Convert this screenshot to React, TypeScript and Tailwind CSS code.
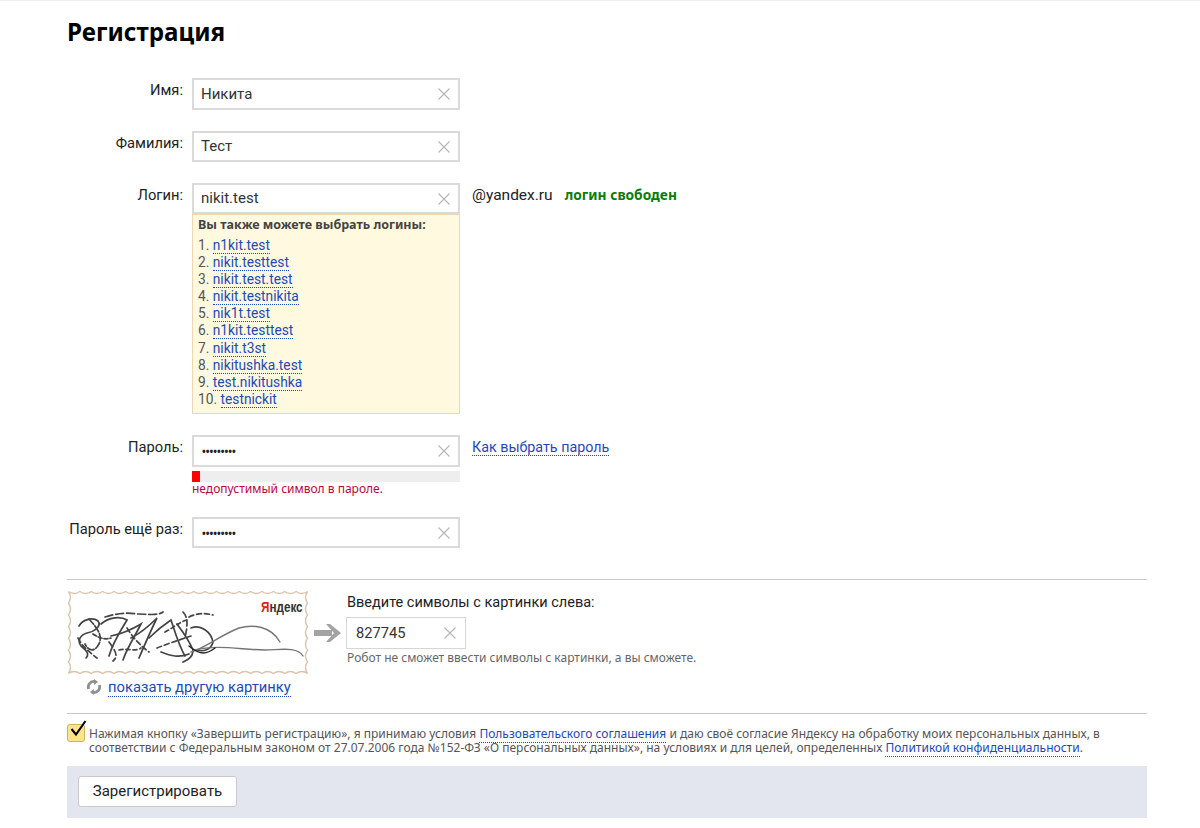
const font = { fontFamily: '"Noto Sans", sans-serif' };
const roboto = { fontFamily: 'Roboto, sans-serif' };

const logins = [
  "n1kit.test",
  "nikit.testtest",
  "nikit.test.test",
  "nikit.testnikita",
  "nik1t.test",
  "n1kit.testtest",
  "nikit.t3st",
  "nikitushka.test",
  "test.nikitushka",
  "testnickit",
];

function ClearIcon() {
  return (
    <svg width="12" height="12" viewBox="0 0 12 12" className="shrink-0">
      <path d="M0.5 0.5L11.5 11.5M11.5 0.5L0.5 11.5" stroke="#b5b5b5" strokeWidth="1.1" fill="none" />
    </svg>
  );
}

function Field({ value, secret, short, className }: { value: string; secret?: boolean; short?: boolean; className?: string }) {
  return (
    <div className={`flex items-center justify-between ${short ? "h-[31px]" : "h-[32px]"} w-[268px] border-2 border-[#dadada] bg-white pl-[7px] pr-[8px] ${className ?? ""}`}>
      {secret ? (
        <span className="ml-[1px] text-[10px] font-bold text-[#222] leading-none">{value}</span>
      ) : (
        <span style={roboto} className="text-[15px] text-[#333] leading-none">{value}</span>
      )}
      <ClearIcon />
    </div>
  );
}

function Label({ children }: { children: string }) {
  return <div style={roboto} className="text-right text-[14.7px] leading-[20px] text-[#222] whitespace-nowrap pt-[2px]">{children}</div>;
}

function DottedLink({ children, className }: { children: string; className?: string }) {
  return <span className={`text-[#1c4ab4] border-b border-dotted border-[#1c4ab4] ${className ?? ""}`}>{children}</span>;
}

function Stamp() {
  // wavy edge of the captcha picture
  const w = 242;
  const h = 85;
  const inset = 1.5;
  const amp = 2;
  const nx = 21;
  const ny = 7;
  const stepX = (w - 2 * inset) / nx;
  const stepY = (h - 2 * inset) / ny;
  let d = `M${inset} ${inset}`;
  for (let i = 0; i < nx; i++) d += ` Q${inset + (i + 0.5) * stepX} ${inset + amp * 2} ${inset + (i + 1) * stepX} ${inset}`;
  for (let i = 0; i < ny; i++) d += ` Q${w - inset - amp * 2} ${inset + (i + 0.5) * stepY} ${w - inset} ${inset + (i + 1) * stepY}`;
  for (let i = nx; i > 0; i--) d += ` Q${inset + (i - 0.5) * stepX} ${h - inset - amp * 2} ${inset + (i - 1) * stepX} ${h - inset}`;
  for (let i = ny; i > 0; i--) d += ` Q${inset + amp * 2} ${inset + (i - 0.5) * stepY} ${inset} ${inset + (i - 1) * stepY}`;
  return (
    <svg width={w} height={h} viewBox={`0 0 ${w} ${h}`} className="block">
      <path d={d} fill="#fff" stroke="#d9c3ab" strokeWidth="1.4" />
      <text transform="translate(194 22) scale(0.78 1)" fontSize="15" fontWeight="700" fill="#333" style={{ fontFamily: '"Liberation Sans", sans-serif' }}>
        <tspan fill="#e0201b">Я</tspan>ндекс
      </text>
      <g fill="none" stroke="#444" strokeWidth="1.7" strokeLinecap="round">
        <path d="M12 36C16 29 26 27 31 31C35 36 27 42 20 43C13 45 10 51 14 56C19 60 23 64 19 68" />
        <path d="M22 29C30 38 38 47 30 57C26 62 21 60 18 54" strokeDasharray="7 2" />
        <path d="M11 48C15 56 22 62 30 68" strokeDasharray="5 3" />
        <path d="M26 44C32 48 38 50 44 48" strokeDasharray="4 2" />
        <path d="M34 34C42 27 54 26 60 30C54 40 46 52 42 66" />
        <path d="M38 27C48 24 58 22 70 24C80 24 90 26 96 22" strokeDasharray="8 3" />
        <path d="M44 46C54 44 64 40 74 34C68 46 60 58 56 70" />
        <path d="M42 52C48 60 52 66 46 71" strokeDasharray="6 3" />
        <path d="M64 48C76 42 84 34 90 28C84 40 78 54 72 68" />
        <path d="M60 38C66 48 74 56 82 62" strokeDasharray="5 3" />
        <path d="M52 60C60 58 68 62 74 58" strokeDasharray="4 3" />
        <path d="M82 48C90 40 98 34 104 30C108 42 112 56 118 66" />
        <path d="M90 58C100 54 112 50 124 46" strokeDasharray="5 3" />
        <path d="M94 62C104 66 112 68 122 64" />
        <path d="M116 22C122 28 120 38 118 48" strokeDasharray="6 3" />
        <path d="M122 27C130 23 138 23 146 25" strokeDasharray="5 3" />
        <path d="M124 38C134 34 144 42 146 52C144 60 136 62 130 60" />
        <path d="M110 34C116 42 122 50 126 60C126 68 120 70 116 72" />
        <path d="M98 42C106 38 112 32 120 30" strokeDasharray="4 3" />
      </g>
      <g fill="none" stroke="#757575" strokeWidth="1.4" strokeLinecap="round">
        <path d="M124 62C138 58 152 46 172 38C186 34 204 36 213 52" />
        <path d="M128 60C150 54 176 60 198 60C212 60 230 56 236 66" />
        <path d="M122 56C134 66 140 64 148 58" stroke="#222" />
      </g>
    </svg>
  );
}

export default function App() {
  return (
    <div style={font} className="w-[1200px] h-[828px] overflow-hidden bg-white border-t border-[#eeeeee] pl-[67px] pr-[53px]">
      <h1 className="mt-[15px] text-[24.2px] leading-[32px] font-bold text-black">Регистрация</h1>

      <div className="mt-[30px] grid grid-cols-[116px_268px_1fr] gap-x-[9px]">
        <Label>Имя:</Label>
        <Field value="Никита" />
        <div />

        <div className="mt-[21px]"><Label>Фамилия:</Label></div>
        <Field value="Тест" short className="mt-[21px]" />
        <div />

        <div className="mt-[21px]"><Label>Логин:</Label></div>
        <div className="mt-[21px]">
          <Field value="nikit.test" short />
          <div style={roboto} className="h-[200px] border border-[#f0d6ae] bg-[#fff9e0] pl-[5px] pt-[1px] text-[13.75px] leading-[17.1px] text-[#555]">
            <div style={font} className="text-[12.5px] font-bold leading-[17px] text-[#444] mb-[4px]">Вы также можете выбрать логины:</div>
            {logins.map((l, i) => (
              <div key={l}>
                {i + 1}. <DottedLink>{l}</DottedLink>
              </div>
            ))}
          </div>
        </div>
        <div style={roboto} className="mt-[21px] pl-[3px] text-[15.5px] leading-[24px] whitespace-nowrap">
          <span className="text-[#222]">@yandex.ru</span>
          <span style={font} className="ml-[12px] font-bold text-[13.75px] text-[#0a7d0a]">логин свободен</span>
        </div>

        <div className="mt-[21px]"><Label>Пароль:</Label></div>
        <div className="mt-[21px]">
          <Field value="•••••••••" secret />
          <div className="mt-[4px] h-[11px] bg-[#eeeeee]">
            <div className="h-full w-[8px] bg-[#ff0000]" />
          </div>
          <div className="-mt-[1px] text-[12px] leading-[15px] text-[#b4093c] whitespace-nowrap">недопустимый символ в пароле.</div>
        </div>
        <div style={roboto} className="mt-[21px] pl-[3px] text-[14.3px] leading-[24px] whitespace-nowrap">
          <DottedLink>Как выбрать пароль</DottedLink>
        </div>

        <div className="mt-[21px]"><Label>Пароль ещё раз:</Label></div>
        <Field value="•••••••••" secret short className="mt-[21px]" />
        <div />
      </div>

      <div className="mt-[31px] h-px bg-[#c8c8c8]" />

      <div className="mt-[10px] flex">
        <div className="w-[242px]">
          <Stamp />
          <div className="mt-[2px] ml-[19px] flex items-center gap-[6px]">
            <svg width="16" height="16" viewBox="0 0 16 16" fill="none" stroke="#8a948a" strokeWidth="2.8">
              <path d="M2.500 10C1.500 5.500 4.500 2 9 2.500" />
              <path d="M13.500 6C14.500 10.500 11.500 14 7 13.500" />
              <path d="M8 0L12 3L8 6" fill="#8a948a" stroke="none" />
              <path d="M8 16L4 13L8 10" fill="#8a948a" stroke="none" />
            </svg>
            <span style={roboto} className="text-[14.75px] leading-[20px] whitespace-nowrap">
              <DottedLink>показать другую картинку</DottedLink>
            </span>
          </div>
        </div>
        <svg width="28" height="18" viewBox="0 0 28 18" className="ml-[5px] mt-[34px]">
          <path d="M0 6H18V12H0Z" fill="#a3a3a3" />
          <path d="M12 0L16 0L27 9L16 18L12 18L20 9Z" fill="#a3a3a3" />
        </svg>
        <div className="ml-[5px]">
          <div style={roboto} className="text-[14.5px] leading-[20px] text-[#222] whitespace-nowrap mt-[3px]">Введите символы с картинки слева:</div>
          <div className="mt-[4px] -ml-[1px] flex items-center justify-between h-[32px] w-[120px] border border-[#d6d6d6] pl-[9px] pr-[9px]">
            <span style={roboto} className="text-[14.7px] text-[#333]">827745</span>
            <ClearIcon />
          </div>
          <div className="text-[12px] leading-[18px] text-[#666] whitespace-nowrap">Робот не сможет ввести символы с картинки, а вы сможете.</div>
        </div>
      </div>

      <div className="mt-[16px] h-px bg-[#c8c8c8]" />

      <div className="mt-[9px] flex">
        <div className="relative mt-[1px] h-[18px] w-[18px] shrink-0 rounded-[3px] border border-[#d0b45a] bg-[#ffe38c]">
          <svg width="20" height="20" viewBox="0 0 20 20" className="absolute left-[0px] top-[-6px]">
            <path d="M3.500 10L8 15.500L17.500 2" fill="none" stroke="#000" strokeWidth="2" />
          </svg>
        </div>
        <p className="ml-[4px] mt-[4px] text-[12.03px] leading-[14px] text-[#555]">
          Нажимая кнопку «Завершить регистрацию», я принимаю условия <DottedLink>Пользовательского соглашения</DottedLink> и даю своё согласие Яндексу на обработку моих персональных данных, в соответствии с Федеральным законом от 27.07.2006 года №152-ФЗ «О персональных данных», на условиях и для целей, определенных <DottedLink>Политикой конфиденциальности</DottedLink>.
        </p>
      </div>

      <div className="mt-[11px] h-[52px] bg-[#e3e6ef] pl-[11px] pt-[10px]">
        <button style={roboto} className="h-[31px] w-[159px] rounded-[3px] border border-[#c9c9c9] bg-white text-[15px] text-[#222]">Зарегистрировать</button>
      </div>
    </div>
  );
}
